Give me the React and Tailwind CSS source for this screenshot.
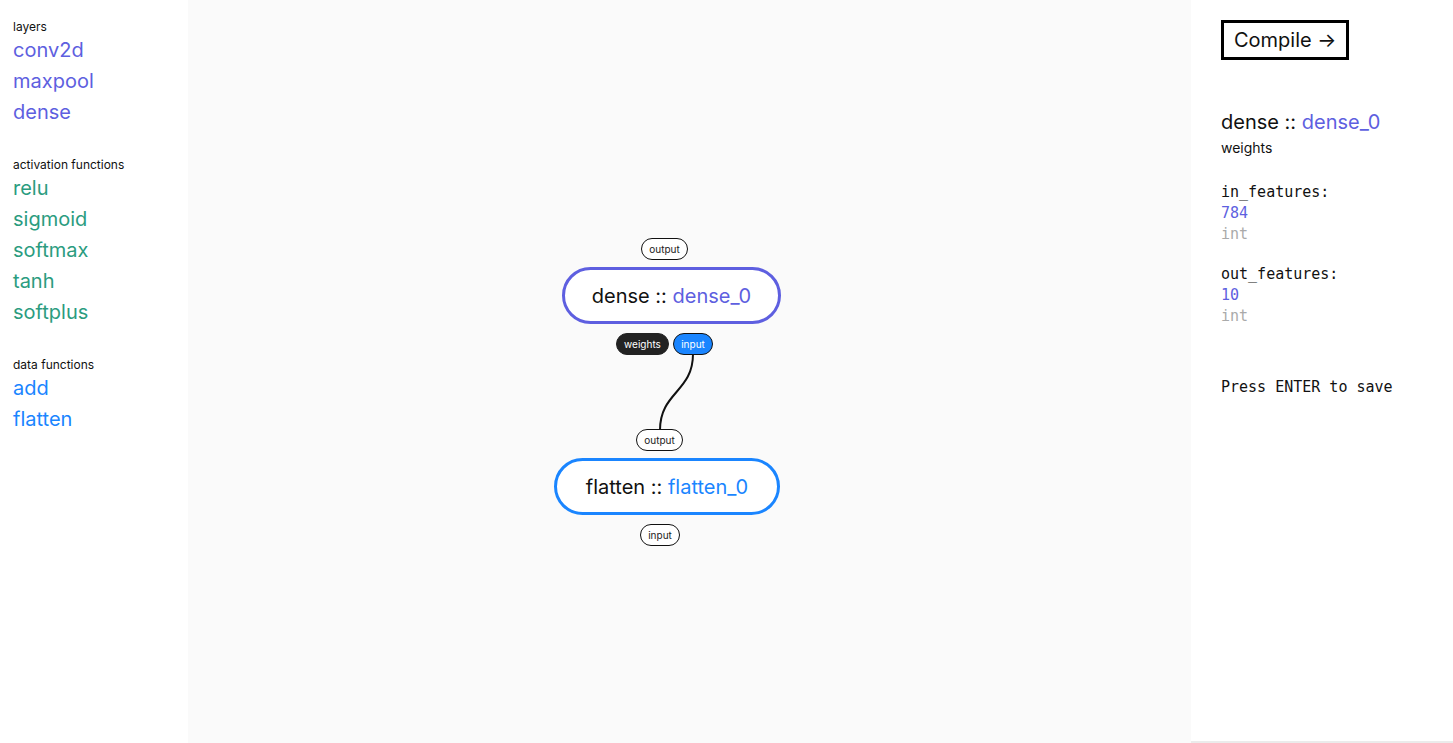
import React from "react";

const sans = { fontFamily: "Inter, 'Noto Sans', sans-serif" };
const mono = { fontFamily: "'DejaVu Sans Mono', 'Liberation Mono', monospace" };

function Section({ title, items, color, first }) {
  return (
    <div className={first ? "" : "mt-[29px]"}>
      <div className="text-[12px] leading-[16px] text-[#111]">{title}</div>
      {items.map((it) => (
        <div key={it} className={`text-[20px] leading-[31px] ${color}`}>
          {it}
        </div>
      ))}
    </div>
  );
}

function Pill({ children, x, y, w, variant = "plain" }) {
  const cls =
    variant === "dark"
      ? "bg-[#222] text-white border-[#222]"
      : variant === "blue"
      ? "bg-[#1a85ff] text-white border-[#111]"
      : "bg-white text-[#222] border-[#111]";
  return (
    <div
      className={`absolute h-[22px] rounded-full border text-[10px] leading-[20px] flex items-center justify-center ${cls}`}
      style={{ left: x, top: y, width: w }}
    >
      {children}
    </div>
  );
}

export default function App() {
  return (
    <div className="flex h-[743px] w-full overflow-hidden bg-white" style={sans}>
      {/* left sidebar */}
      <div className="w-[188px] shrink-0 bg-white pl-[13px] pt-[19px]">
        <Section first title="layers" items={["conv2d", "maxpool", "dense"]} color="text-[#5e5fe0]" />
        <Section
          title="activation functions"
          items={["relu", "sigmoid", "softmax", "tanh", "softplus"]}
          color="text-[#2b9c80]"
        />
        <Section title="data functions" items={["add", "flatten"]} color="text-[#1a85ff]" />
      </div>

      {/* canvas */}
      <div className="relative flex-1 bg-[#fafafa]">
        <svg className="absolute left-0 top-0" width="1003" height="743">
          <path d="M505 354 C505 392 472 392 472 430" fill="none" stroke="#111" strokeWidth="2" />
        </svg>

        <Pill x={453} y={238} w={47}>output</Pill>
        <div
          className="absolute flex items-center justify-center rounded-full border-[3px] border-[#5e5fe0] bg-white text-[20px] text-[#111]"
          style={{ left: 374, top: 267, width: 219, height: 57 }}
        >
          <span>
            dense :: <span className="text-[#5e5fe0]">dense_0</span>
          </span>
        </div>
        <Pill x={428} y={333} w={53} variant="dark">weights</Pill>
        <Pill x={485} y={333} w={40} variant="blue">input</Pill>

        <Pill x={448} y={429} w={47}>output</Pill>
        <div
          className="absolute flex items-center justify-center rounded-full border-[3px] border-[#1a85ff] bg-white text-[20px] text-[#111]"
          style={{ left: 366, top: 458, width: 226, height: 57 }}
        >
          <span>
            flatten :: <span className="text-[#1a85ff]">flatten_0</span>
          </span>
        </div>
        <Pill x={452} y={524} w={40}>input</Pill>
      </div>

      {/* right panel */}
      <div className="flex w-[262px] shrink-0 flex-col border-b-2 border-[#ebebeb] bg-white pl-[30px] pt-[20px]">
        <div>
          <button className="border-[3px] border-black px-[10px] pt-[4px] pb-[3px] text-[20px] leading-[27px] text-[#111]">
            Compile →
          </button>
        </div>
        <div className="mt-[48px] text-[20px] leading-[28px] text-[#111]">
          dense :: <span className="text-[#5e5fe0]">dense_0</span>
        </div>
        <div className="mt-[2px] text-[14px] leading-[20px] text-[#111]">weights</div>

        <div className="mt-[24px] text-[15px] leading-[21px]" style={mono}>
          <div className="text-[#111]">in_features:</div>
          <div className="text-[#5e5fe0]">784</div>
          <div className="text-[#aaa]">int</div>
          <div className="mt-[19px] text-[#111]">out_features:</div>
          <div className="text-[#5e5fe0]">10</div>
          <div className="text-[#aaa]">int</div>
          <div className="mt-[50px] text-[#111]">Press ENTER to save</div>
        </div>
      </div>
    </div>
  );
}
